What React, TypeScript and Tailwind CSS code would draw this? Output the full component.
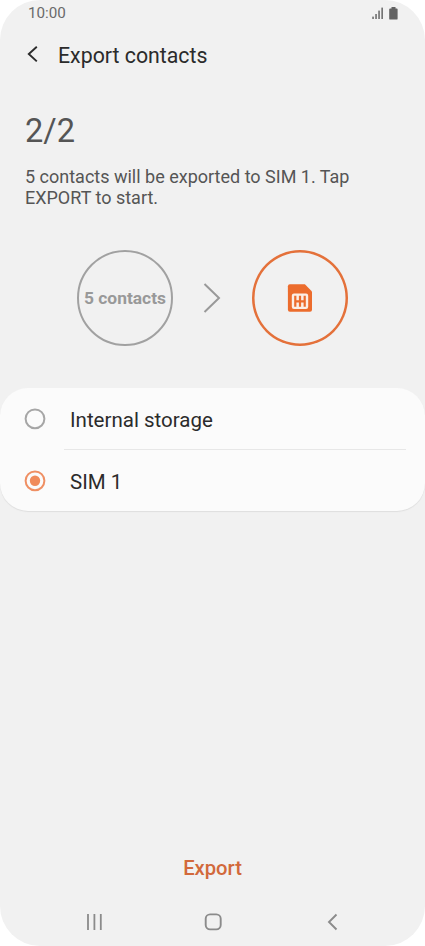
import React from 'react';

const storageOptions = [
  { id: 'internal', label: 'Internal storage', selected: false },
  { id: 'sim1', label: 'SIM 1', selected: true },
];

const StatusBar = () => (
  <div className="flex h-[27px] items-center justify-between pl-7 pr-[27px]">
    <span className="text-[15.2px] leading-[27px] text-[#6a6a6a]">10:00</span>
    <div className="flex items-center gap-[5px] pb-px">
      <svg width="12" height="13" viewBox="0 0 12 13" fill="#666666">
        <rect x="0.3" y="9.6" width="1.5" height="2.4" />
        <rect x="3.3" y="7" width="1.5" height="5" />
        <rect x="6.3" y="3.6" width="1.5" height="8.4" />
        <rect x="9.4" y="0.6" width="1.5" height="11.4" />
      </svg>
      <svg width="9" height="13" viewBox="0 0 9 13" fill="#636363">
        <path d="M2.5 0h4v1.4h1.2q.9 0 .9.9v9.4q0 .9-.9.9H1.1q-.9 0-.9-.9V2.3q0-.9.9-.9h1.4z" />
      </svg>
    </div>
  </div>
);

const SimIcon = () => (
  <svg width="26" height="28" viewBox="0 0 26 28" fill="none">
    <path d="M2.9 0.2H17.9L25 7.4V25.8Q25 27.8 23 27.8H2.9Q0.9 27.8 0.9 25.8V2.2Q0.9 0.2 2.9 0.2Z" fill="#ec6c2d" />
    <rect x="4.8" y="9.6" width="16.4" height="15.4" rx="2.2" fill="#fbeee6" />
    <path d="M8.3 11.8V22.8M13 11.8V22.8M17.7 11.8V22.8M8.3 17.3H17.7" stroke="#ec6c2d" strokeWidth="2.2" />
  </svg>
);

const Radio = ({ selected }: { selected: boolean }) => (
  <svg width="22" height="22" viewBox="0 0 22 22" fill="none">
    <circle cx="11" cy="10.8" r="9.4" stroke={selected ? '#ef8f63' : '#a6a6a6'} strokeWidth="2" />
    {selected && <circle cx="11" cy="10.8" r="5.2" fill="#f08b5b" />}
  </svg>
);

export default function App() {
  return (
    <div className="h-[946px] w-[425px] overflow-hidden bg-white font-['Roboto',sans-serif]">
      <div className="flex h-[946px] flex-col rounded-[40px] bg-[#f1f1f1]">
        <StatusBar />

        <header className="flex h-[56px] items-center pl-[27px]">
          <svg width="12" height="18" viewBox="0 0 12 18" fill="none">
            <path d="M9.8 0.8L1.8 8L9.8 15.4" stroke="#2b2b2b" strokeWidth="1.9" />
          </svg>
          <h1 className="ml-[19px] pt-px text-[21.3px] leading-7 text-[#2b2b2b]">Export contacts</h1>
        </header>

        <section className="px-[25px] pt-7 text-[#555555]">
          <h2 className="text-[32.5px] leading-10">2/2</h2>
          <p className="mt-[15px] text-[18px] leading-[21px]">
            5 contacts will be exported to SIM 1. Tap
            <br />
            EXPORT to start.
          </p>
        </section>

        <div className="mt-[42px] flex h-24 items-center pl-[77px]">
          <div className="flex h-24 w-24 items-center justify-center rounded-full border-2 border-[#a1a1a1]">
            <span className="whitespace-nowrap pt-px text-[17.4px] font-bold text-[#999999]">5 contacts</span>
          </div>
          <svg className="ml-[30px]" width="19" height="30" viewBox="0 0 19 30" fill="none">
            <path d="M1.5 1L16 15L1.5 29" stroke="#999999" strokeWidth="2" />
          </svg>
          <div className="ml-[30px] flex h-24 w-24 items-center justify-center rounded-full shadow-[inset_0_0_0_2.5px_#e4713a]">
            <SimIcon />
          </div>
        </div>

        <ul className="mt-[42px] h-[123px] rounded-[28px] bg-[#fbfbfb] shadow-[0_1px_1px_#dedede]">
          {storageOptions.map((option, i) => (
            <li key={option.id}>
              {i > 0 && <div className="ml-16 mr-[19px] h-px bg-[#e7e7e7]" />}
              <div className="flex h-[61px] items-center pl-6">
                <Radio selected={option.selected} />
                <span className="ml-6 pt-0.5 text-[20.5px] leading-6 text-[#2b2b2b]">{option.label}</span>
              </div>
            </li>
          ))}
        </ul>

        <button className="mt-auto h-10 text-[20.2px] font-medium text-[#d2693b]">Export</button>

        <nav className="mb-[10px] mt-[19px] flex h-[29px] items-center pl-[86px]">
          <svg width="17" height="18" viewBox="0 0 17 18" fill="none">
            <path d="M2 1V17M8.4 1V17M14.8 1V17" stroke="#8b8b8b" strokeWidth="1.8" />
          </svg>
          <svg className="ml-[101px]" width="18" height="18" viewBox="0 0 18 18" fill="none">
            <rect x="1.7" y="1.4" width="15" height="15" rx="4.4" stroke="#8b8b8b" strokeWidth="1.9" />
          </svg>
          <svg className="ml-[105px]" width="12" height="18" viewBox="0 0 12 18" fill="none">
            <path d="M9.5 1.5L2 9L9.5 16.5" stroke="#8b8b8b" strokeWidth="1.9" />
          </svg>
        </nav>
      </div>
    </div>
  );
}
